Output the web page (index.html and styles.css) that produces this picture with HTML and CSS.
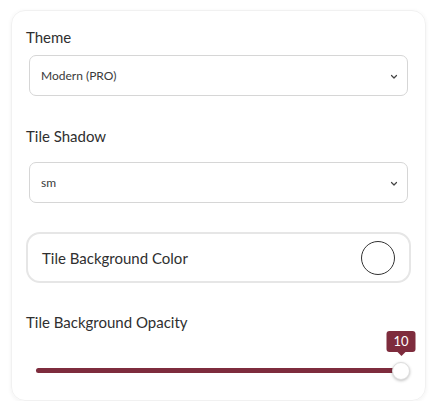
FILE: index.html
```html
<!DOCTYPE html>
<html>
<head>
<meta charset="utf-8">
<link rel="stylesheet" href="styles.css">
</head>
<body>
<div class="card">
  <div class="label">Theme</div>
  <div class="select select-first">
    <span>Modern (PRO)</span>
    <svg class="chev" width="8" height="6" viewBox="0 0 8 6"><path d="M1.5 1.5 L4 4 L6.5 1.5" fill="none" stroke="#444" stroke-width="1.2" stroke-linecap="round" stroke-linejoin="round"/></svg>
  </div>
  <div class="label label-gap">Tile Shadow</div>
  <div class="select select-second">
    <span>sm</span>
    <svg class="chev" width="8" height="6" viewBox="0 0 8 6"><path d="M1.5 1.5 L4 4 L6.5 1.5" fill="none" stroke="#444" stroke-width="1.2" stroke-linecap="round" stroke-linejoin="round"/></svg>
  </div>
  <div class="color-row">
    <span>Tile Background Color</span>
    <span class="swatch"></span>
  </div>
  <div class="label label-gap3">Tile Background Opacity</div>
  <div class="slider">
    <div class="track">
      <div class="fill" style="width:100%"></div>
      <div class="thumb" style="left:100%">
        <div class="tip">10</div>
      </div>
    </div>
  </div>
</div>
</body>
</html>
```
FILE: styles.css
```css
html, body {
  margin: 0;
  padding: 0;
  background: #ffffff;
}
body {
  font-family: Lato, "Open Sans", sans-serif;
  color: #2e2e2e;
}
.card {
  margin: 10px 10px 0 11px;
  width: 415px;
  height: 391px;
  box-sizing: border-box;
  padding: 16px 14px 0 14px;
  border-radius: 14px;
  border: 1px solid #f1f1f1;
  box-shadow: 0 1px 4px rgba(0,0,0,0.06);
  display: flex;
  flex-direction: column;
}
.label {
  font-size: 15px;
  line-height: 20px;
  height: 20px;
  color: #2f2f2f;
}
.label-gap { margin-top: 30px; }
.label-gap3 { margin-top: 29px; }
.select {
  margin: 0 3px;
  height: 41px;
  box-sizing: border-box;
  border: 1px solid #d6d6d6;
  border-radius: 7px;
  display: flex;
  align-items: center;
  justify-content: space-between;
  padding: 0 9px 0 11px;
  font-size: 12px;
  color: #3a3a3a;
}
.select-first { margin-top: 8px; }
.select-second { margin-top: 16px; }
.chev { display: block; margin-top: 2px; }
.color-row {
  margin-top: 29px;
  height: 51px;
  box-sizing: border-box;
  border: 2px solid #e6e6e6;
  border-radius: 14px;
  display: flex;
  align-items: center;
  justify-content: space-between;
  padding: 0 14px 0 14px;
  font-size: 15px;
  color: #2f2f2f;
}
.swatch {
  width: 34px;
  height: 34px;
  box-sizing: border-box;
  border-radius: 50%;
  border: 1.3px solid #333;
  background: #fff;
}
.slider {
  padding: 0 10px;
  height: 57px;
  display: flex;
  align-items: flex-end;
}
.track {
  position: relative;
  width: 100%;
  height: 5px;
  margin-bottom: 16px;
  border-radius: 3px;
  background: #e6e6e6;
}
.fill {
  height: 100%;
  border-radius: 3px;
  background: #7e2c3d;
}
.thumb {
  position: absolute;
  top: 50%;
  width: 18px;
  height: 18px;
  margin-left: -9px;
  margin-top: -9px;
  border-radius: 50%;
  background: #fff;
  border: 1px solid #dedede;
  box-sizing: border-box;
  box-shadow: 0 1px 3px rgba(0,0,0,0.25);
}
.tip {
  position: absolute;
  bottom: 27px;
  left: 50%;
  transform: translateX(-50%);
  width: 29px;
  height: 21px;
  border-radius: 3px;
  background: #7e2c3d;
  color: #fff;
  font-size: 13px;
  line-height: 21px;
  text-align: center;
}
.tip::after {
  content: "";
  position: absolute;
  left: 50%;
  bottom: -4px;
  margin-left: -4px;
  border-left: 4px solid transparent;
  border-right: 4px solid transparent;
  border-top: 4px solid #7e2c3d;
}
```
